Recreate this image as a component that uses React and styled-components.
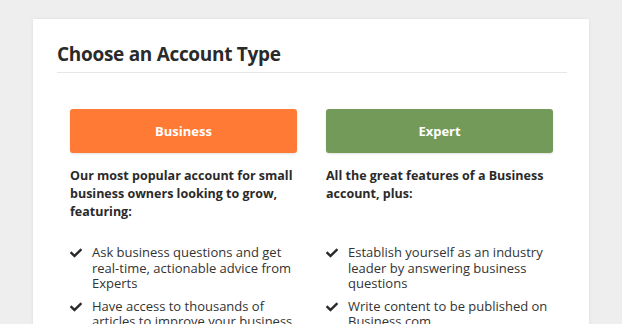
import React from "react";
import styled, { createGlobalStyle } from "styled-components";
import { FaCheck } from "react-icons/fa";

const GlobalStyle = createGlobalStyle`
  body {
    margin: 0;
    background: #eeeeee;
    font-family: "Open Sans", "Noto Sans", sans-serif;
    color: #2b2b2b;
  }
`;

const Page = styled.div`
  padding: 19px 0 0 33px;
  height: 324px;
  box-sizing: border-box;
  overflow: hidden;
`;

const Card = styled.section`
  width: 556px;
  background: #ffffff;
  box-shadow: 0 0 3px rgba(0, 0, 0, 0.08);
  padding: 22px 22px 40px 24px;
  box-sizing: border-box;
`;

const Title = styled.h1`
  margin: 0;
  font-size: 19px;
  font-weight: 700;
  letter-spacing: -0.3px;
  line-height: 26px;
  padding-bottom: 5px;
  border-bottom: 1px solid #e6e6e6;
  color: #2a2a2a;
`;

const Columns = styled.div`
  display: grid;
  grid-template-columns: 227px 227px;
  column-gap: 29px;
  padding: 36px 13px 0;
`;

const Column = styled.div`
  display: flex;
  flex-direction: column;
`;

const TypeButton = styled.button`
  height: 44px;
  border: none;
  border-radius: 3px;
  background: ${(p) => p.$color};
  color: #ffffff;
  font-family: inherit;
  font-size: 13px;
  font-weight: 700;
  box-shadow: 0 1px 2px rgba(0, 0, 0, 0.12);
  cursor: pointer;
`;

const Intro = styled.p`
  margin: 14px 0 0;
  font-size: 12.5px;
  font-weight: 700;
  line-height: 18px;
  color: #2a2a2a;
  min-height: 54px;
`;

const Features = styled.ul`
  list-style: none;
  margin: 24px 0 0;
  padding: 0;
  display: flex;
  flex-direction: column;
  gap: 7px;
`;

const Feature = styled.li`
  display: flex;
  align-items: flex-start;
  gap: 10px;
  font-size: 13px;
  line-height: 15.5px;
  color: #333333;

  svg {
    flex: none;
    width: 12px;
    height: 12px;
    margin-top: 2px;
    color: #2a2a2a;
  }
`;

const accounts = [
  {
    name: "Business",
    color: "#ff7a35",
    intro: "Our most popular account for small business owners looking to grow, featuring:",
    features: [
      "Ask business questions and get real-time, actionable advice from Experts",
      "Have access to thousands of articles to improve your business",
    ],
  },
  {
    name: "Expert",
    color: "#739a59",
    intro: "All the great features of a Business account, plus:",
    features: [
      "Establish yourself as an industry leader by answering business questions",
      "Write content to be published on Business.com",
    ],
  },
];

export default function App() {
  return (
    <>
      <GlobalStyle />
      <Page>
        <Card>
          <Title>Choose an Account Type</Title>
          <Columns>
            {accounts.map((a) => (
              <Column key={a.name}>
                <TypeButton $color={a.color}>{a.name}</TypeButton>
                <Intro>{a.intro}</Intro>
                <Features>
                  {a.features.map((f) => (
                    <Feature key={f}>
                      <FaCheck />
                      <span>{f}</span>
                    </Feature>
                  ))}
                </Features>
              </Column>
            ))}
          </Columns>
        </Card>
      </Page>
    </>
  );
}
